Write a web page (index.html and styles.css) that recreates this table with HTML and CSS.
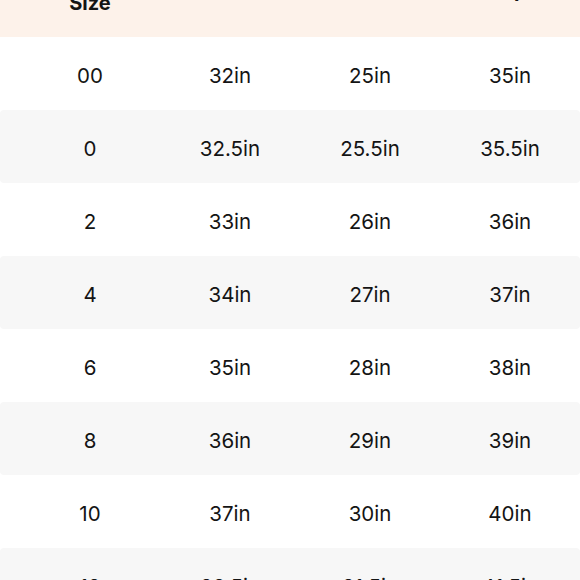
FILE: index.html
```html
<!DOCTYPE html>
<html lang="en">
<head>
<meta charset="utf-8">
<title>Size Chart</title>
<link rel="stylesheet" href="styles.css">
</head>
<body>
<div class="chart">
  <div class="row head">
    <div class="cell">US<br>Size</div>
    <div class="cell">Bust</div>
    <div class="cell">Waist</div>
    <div class="cell">Hip</div>
  </div>
  <div class="row"><div class="cell">00</div><div class="cell">32in</div><div class="cell">25in</div><div class="cell">35in</div></div>
  <div class="row alt"><div class="cell">0</div><div class="cell">32.5in</div><div class="cell">25.5in</div><div class="cell">35.5in</div></div>
  <div class="row"><div class="cell">2</div><div class="cell">33in</div><div class="cell">26in</div><div class="cell">36in</div></div>
  <div class="row alt"><div class="cell">4</div><div class="cell">34in</div><div class="cell">27in</div><div class="cell">37in</div></div>
  <div class="row"><div class="cell">6</div><div class="cell">35in</div><div class="cell">28in</div><div class="cell">38in</div></div>
  <div class="row alt"><div class="cell">8</div><div class="cell">36in</div><div class="cell">29in</div><div class="cell">39in</div></div>
  <div class="row"><div class="cell">10</div><div class="cell">37in</div><div class="cell">30in</div><div class="cell">40in</div></div>
  <div class="row alt"><div class="cell">12</div><div class="cell">38.5in</div><div class="cell">31.5in</div><div class="cell">41.5in</div></div>
  <div class="row"><div class="cell">14</div><div class="cell">40in</div><div class="cell">33in</div><div class="cell">43in</div></div>
</div>
</body>
</html>
```
FILE: styles.css
```css
html, body {
  margin: 0;
  padding: 0;
  background: #ffffff;
}
body {
  font-family: Inter, "Open Sans", sans-serif;
  color: #141414;
  overflow: hidden;
}
.chart {
  margin-top: -57px;
  display: flex;
  flex-direction: column;
}
.row {
  display: grid;
  grid-template-columns: repeat(4, 140px);
  padding-left: 20px;
  padding-top: 4px;
  box-sizing: border-box;
  height: 73px;
  align-items: center;
  font-size: 20.5px;
  border-radius: 4px;
}
.row.alt {
  background: #f7f7f7;
}
.row.head {
  height: 94px;
  padding-top: 0;
  background: #fdf2ea;
  font-weight: 700;
  font-size: 20px;
  line-height: 26px;
  border-radius: 0;
}
.cell {
  text-align: center;
}
```
